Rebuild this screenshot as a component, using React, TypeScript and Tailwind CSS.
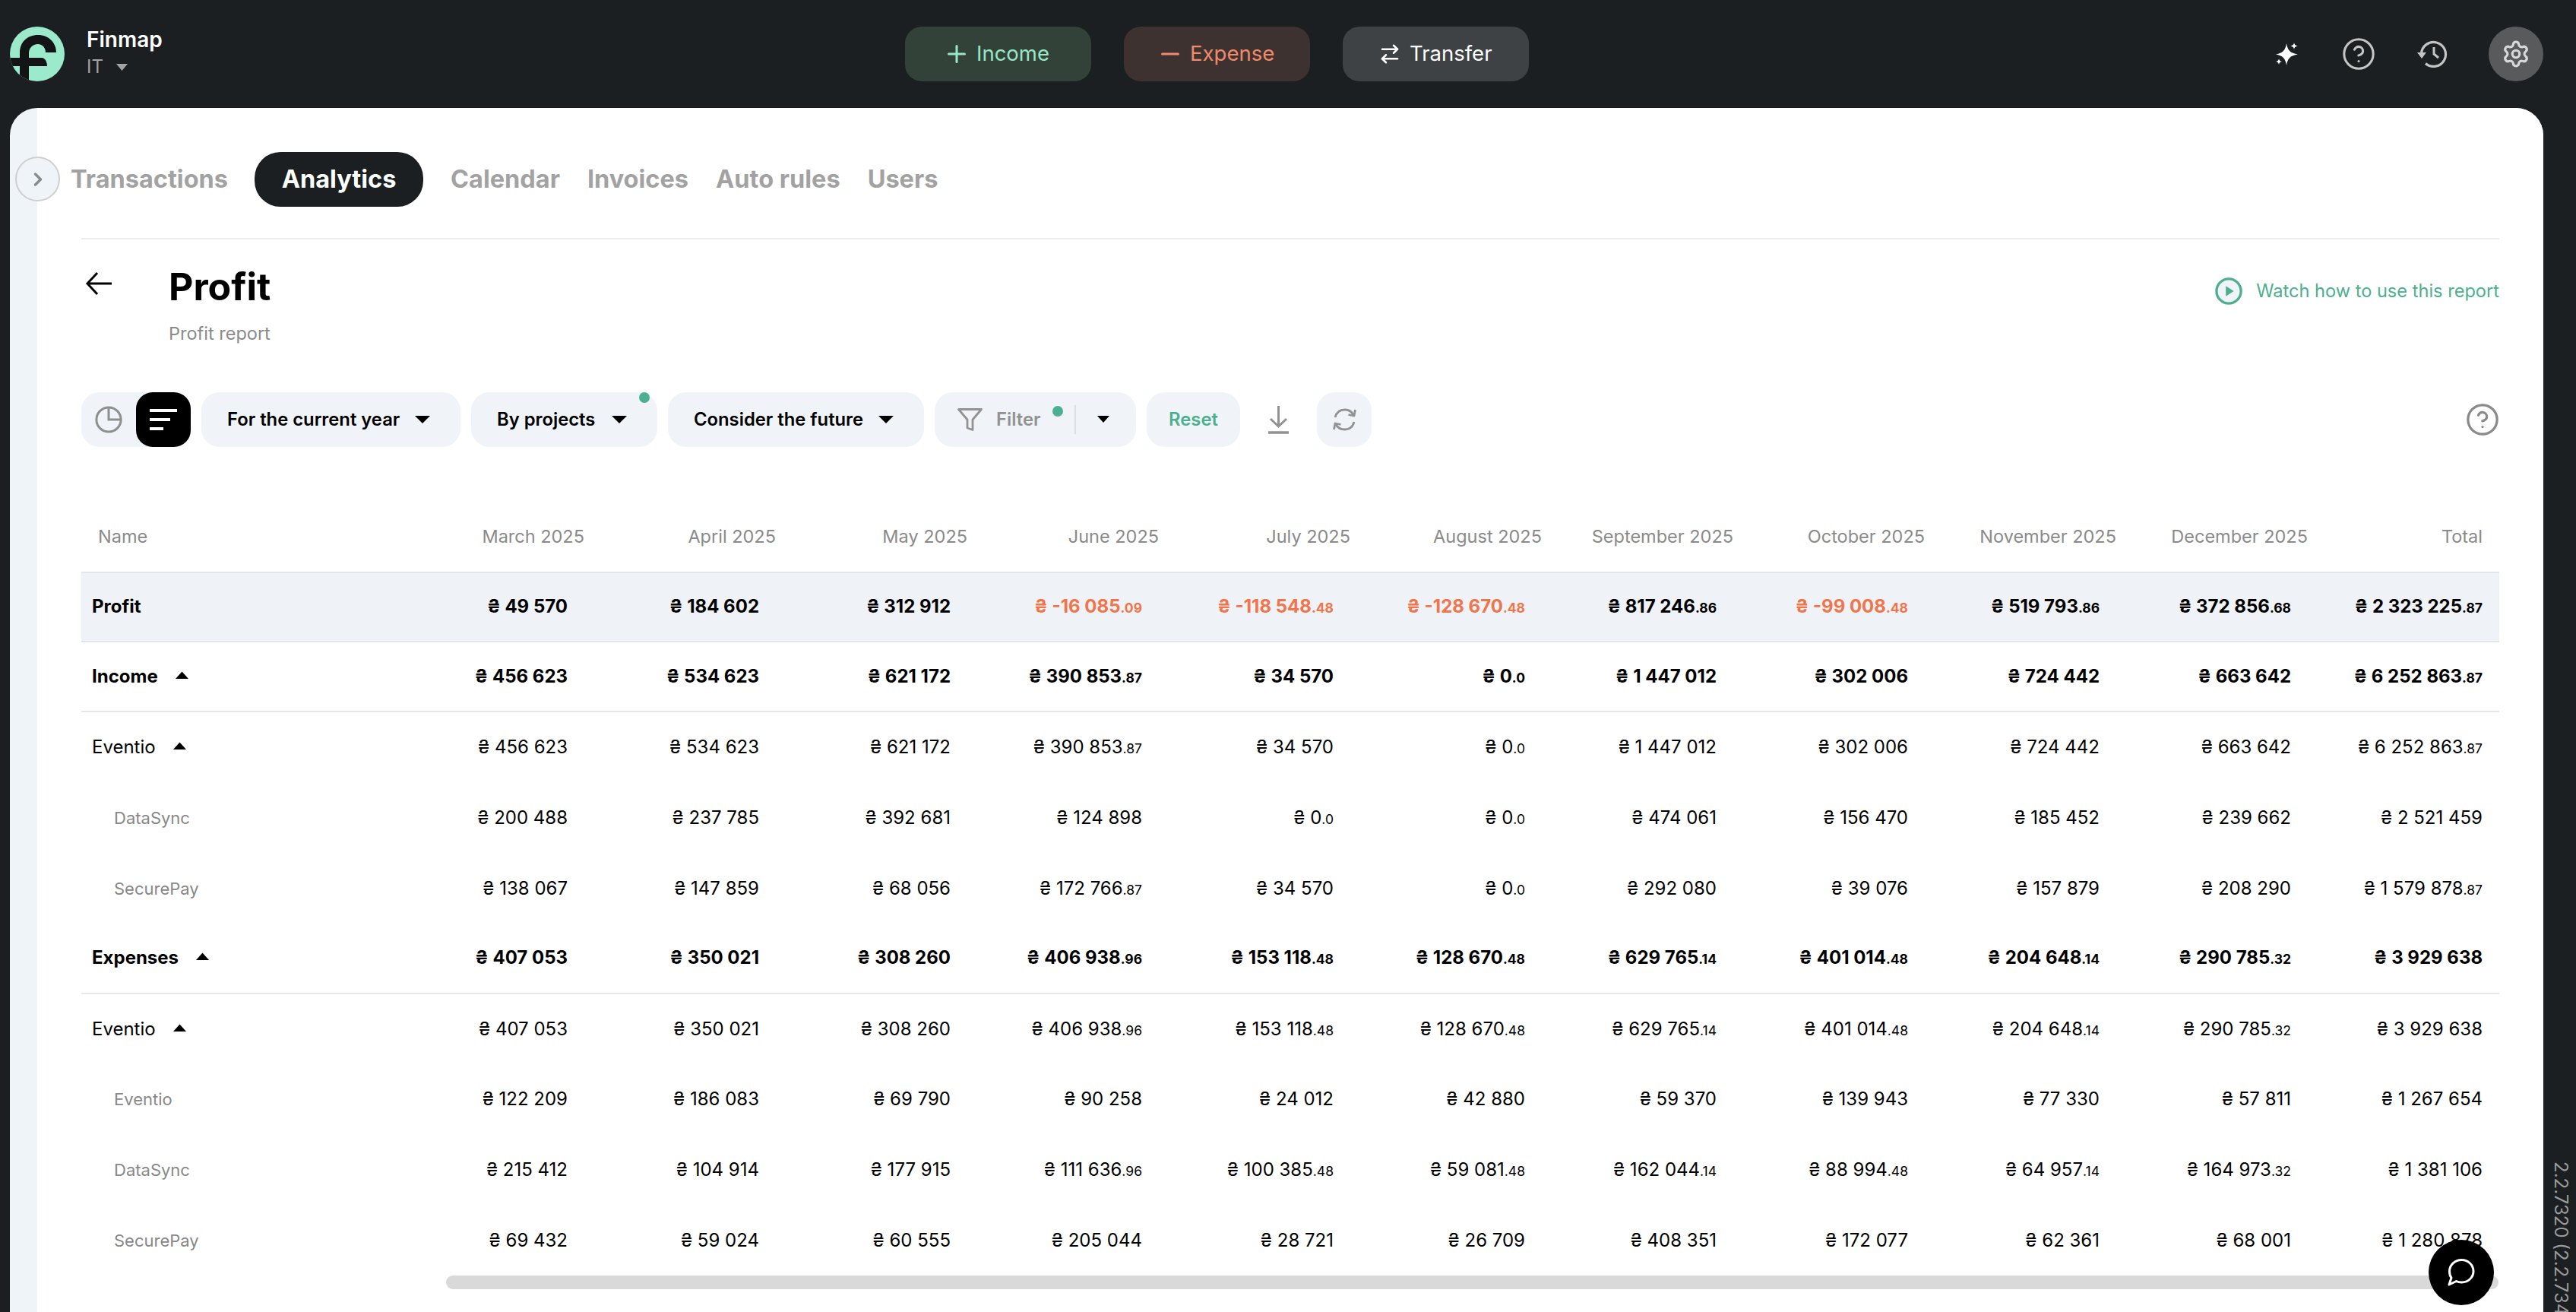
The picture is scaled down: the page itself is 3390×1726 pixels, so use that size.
import React from "react";
import { HelpCircle, Settings, ArrowRightLeft, Plus, Minus, ChevronRight } from "lucide-react";

const months = ["March 2025","April 2025","May 2025","June 2025","July 2025","August 2025","September 2025","October 2025","November 2025","December 2025"];

type Row = { label: string; kind: "profit"|"group"|"sub"|"leaf"; vals: string[] };

const rows: Row[] = [
  { label:"Profit", kind:"profit", vals:["49 570","184 602","312 912","-16 085.09","-118 548.48","-128 670.48","817 246.86","-99 008.48","519 793.86","372 856.68","2 323 225.87"] },
  { label:"Income", kind:"group", vals:["456 623","534 623","621 172","390 853.87","34 570","0.0","1 447 012","302 006","724 442","663 642","6 252 863.87"] },
  { label:"Eventio", kind:"sub", vals:["456 623","534 623","621 172","390 853.87","34 570","0.0","1 447 012","302 006","724 442","663 642","6 252 863.87"] },
  { label:"DataSync", kind:"leaf", vals:["200 488","237 785","392 681","124 898","0.0","0.0","474 061","156 470","185 452","239 662","2 521 459"] },
  { label:"SecurePay", kind:"leaf", vals:["138 067","147 859","68 056","172 766.87","34 570","0.0","292 080","39 076","157 879","208 290","1 579 878.87"] },
  { label:"Expenses", kind:"group", vals:["407 053","350 021","308 260","406 938.96","153 118.48","128 670.48","629 765.14","401 014.48","204 648.14","290 785.32","3 929 638"] },
  { label:"Eventio", kind:"sub", vals:["407 053","350 021","308 260","406 938.96","153 118.48","128 670.48","629 765.14","401 014.48","204 648.14","290 785.32","3 929 638"] },
  { label:"Eventio", kind:"leaf", vals:["122 209","186 083","69 790","90 258","24 012","42 880","59 370","139 943","77 330","57 811","1 267 654"] },
  { label:"DataSync", kind:"leaf", vals:["215 412","104 914","177 915","111 636.96","100 385.48","59 081.48","162 044.14","88 994.48","64 957.14","164 973.32","1 381 106"] },
  { label:"SecurePay", kind:"leaf", vals:["69 432","59 024","60 555","205 044","28 721","26 709","408 351","172 077","62 361","68 001","1 280 878"] },
];

const gridCols = "grid grid-cols-[431px_repeat(10,252px)_231px]";

function Caret({ up = false, className = "", w = 17, h = 10 }: { up?: boolean; className?: string; w?: number; h?: number }) {
  return (
    <svg width={w} height={h} viewBox="0 0 17 10" preserveAspectRatio="none" className={className}>
      <path d={up ? "M8.5 0.5 L17 10 L0 10 Z" : "M0 0 L17 0 L8.5 10 Z"} fill="currentColor" />
    </svg>
  );
}

function Money({ v, kind, total }: { v: string; kind: Row["kind"]; total: boolean }) {
  const neg = v.startsWith("-");
  const [i, d] = v.split(".");
  const weight = kind === "profit" || kind === "group" ? "font-bold" : "font-normal";
  const color = neg ? "text-[#f2744a]" : "text-black";
  return (
    <div className={`flex items-center justify-end ${total ? "pr-[22px]" : "pr-[43px]"}`}>
      <span className={`text-[24px] leading-none whitespace-pre ${weight} ${color}`}>
        {"₴ " + i}
        {d !== undefined && <span className="text-[17.5px]">{"." + d}</span>}
      </span>
    </div>
  );
}

function TableRow({ r }: { r: Row }) {
  const bg = r.kind === "profit" ? "bg-[#eff3f7] border-t-2 border-b-2 border-[#e1e5e9]" : "";
  const sep = r.kind === "group" ? "border-b-2 border-[#e6e8ea]" : "";
  return (
    <div className={`${gridCols} h-[92.6px] items-center box-border ${bg} ${sep}`}>
      <div className="flex items-center">
        {r.kind === "leaf" ? (
          <span className="pl-[43px] text-[22px] leading-none text-[#888888]">{r.label}</span>
        ) : (
          <span className={`pl-[14px] text-[24px] leading-none text-black ${r.kind === "sub" ? "font-normal" : "font-bold"}`}>{r.label}</span>
        )}
        {(r.kind === "group" || r.kind === "sub") && <Caret up className="ml-[23px] text-black mb-[4px]" />}
      </div>
      {r.vals.map((v, i) => (
        <Money key={i} v={v} kind={r.kind} total={i === 10} />
      ))}
    </div>
  );
}

function Pill({ label, className, dot }: { label: string; className: string; dot?: boolean }) {
  return (
    <button className={`relative h-[72px] rounded-[24px] bg-[#f0f4f8] flex items-center justify-between text-[23.8px] font-semibold text-black ${className}`}>
      <span>{label}</span>
      <Caret w={20} h={10} className="text-black" />
      {dot && <span className="absolute right-[10px] top-0 w-[14px] h-[14px] rounded-full bg-[#4cb08e]" />}
    </button>
  );
}

function Logo() {
  return (
    <svg width="72" height="72" viewBox="0 0 72 72">
      <defs><clipPath id="lc"><circle cx="36" cy="36" r="36" /></clipPath></defs>
      <circle cx="36" cy="36" r="36" fill="#9aeacb" />
      <g clipPath="url(#lc)" fill="#121416">
        <path d="M13 72 V35 C13 20 23 11 37 11 C51 11 61 21 61 34 H47 C47 28 43 23 37 23 C30 23 25 28 25 35 V72 Z" />
        <path d="M-2 41 H42 C46 41 49 46 49 52 H-2 Z" />
      </g>
    </svg>
  );
}

function Sparkles() {
  return (
    <svg width="29" height="30" viewBox="0 0 29 30" fill="#fff">
      <path d="M14 1 C15.300 10 19 14 29 15.500 C19 17 15.300 21 14 30 C12.700 21 9 17 0 15.500 C9 14 12.700 10 14 1 Z" />
      <path d="M24 0 C24.400 2.700 25.400 3.700 28.500 4.500 C25.400 5.300 24.400 6.300 24 9 C23.600 6.300 22.600 5.300 19.500 4.500 C22.600 3.700 23.600 2.700 24 0 Z" />
      <path d="M4 21 C4.400 23.400 5.300 24.300 8 25 C5.300 25.700 4.400 26.600 4 29 C3.600 26.600 2.700 25.700 0 25 C2.700 24.300 3.600 23.400 4 21 Z" />
    </svg>
  );
}

function HistoryIcon() {
  return (
    <svg width="40" height="36" viewBox="0 0 40 36" fill="none">
      <path d="M5.500 18 A16 16 0 1 1 11 30.500" stroke="#c4c4c4" strokeWidth="3.200" />
      <path d="M0 16 L12 16 L6 24 Z" fill="#c4c4c4" />
      <path d="M22 9 V18 L28 23" stroke="#c4c4c4" strokeWidth="3" />
    </svg>
  );
}

export default function App() {
  return (
    <div className="relative w-[3390px] h-[1726px] overflow-hidden bg-[#1b1f22] font-['Inter',sans-serif]">
      <header className="h-[142px] flex items-center pl-[13px] pr-[43px] relative">
        <div className="w-[1178px] flex items-center">
          <Logo />
          <div className="ml-[29px] mb-[3px] flex flex-col">
            <span className="text-[28px] leading-[34px] font-semibold text-white">Finmap</span>
            <span className="mt-[3px] text-[24px] leading-[32px] text-[#a3a3a3] flex items-center gap-[17px]">IT <Caret w={15} h={9} className="text-[#a3a3a3]" /></span>
          </div>
        </div>
        <div className="flex gap-[43px]">
          <button className="w-[245px] h-[72px] rounded-[22px] bg-[#334239] text-[#98e6c6] text-[27.5px] flex items-center pl-[50px] gap-[8px]">
            <Plus size={36} strokeWidth={2} /> Income
          </button>
          <button className="w-[245px] h-[72px] rounded-[22px] bg-[#3e3230] text-[#f08a6c] text-[27.5px] flex items-center pl-[43px] gap-[8px]">
            <Minus size={36} strokeWidth={2} /> Expense
          </button>
          <button className="w-[245px] h-[72px] rounded-[22px] bg-[#3e4244] text-white text-[27.5px] flex items-center pl-[47px] gap-[11px]">
            <ArrowRightLeft size={30} strokeWidth={2} /> Transfer
          </button>
        </div>
        <div className="ml-auto flex items-center">
          <Sparkles />
          <HelpCircle size={46} strokeWidth={1.6} className="text-[#c4c4c4] ml-[57px]" />
          <div className="ml-[54px]"><HistoryIcon /></div>
          <div className="ml-[54px] w-[72px] h-[72px] rounded-full bg-[#585a5b] flex items-center justify-center">
            <Settings size={38} strokeWidth={2} className="text-[#d8d8d8]" />
          </div>
        </div>
      </header>

      <div className="relative ml-[13px] mr-[43px] h-[1584px] rounded-t-[36px] overflow-hidden bg-[#eff4f8] pl-[36px]">
        <main className="h-full bg-white pl-[58px] pr-[58px]">
          <nav className="h-[173px] border-b-2 border-[#ebedef] flex items-center text-[32.5px] font-bold text-[#a2a2a2] pt-[17px] box-border">
            <span className="-ml-[14px]">Transactions</span>
            <span className="ml-[35px] h-[72px] w-[222px] rounded-[34px] bg-[#1b1f22] text-white flex items-center justify-center">Analytics</span>
            <span className="ml-[36px]">Calendar</span>
            <span className="ml-[36px]">Invoices</span>
            <span className="ml-[36px]">Auto rules</span>
            <span className="ml-[36px]">Users</span>
          </nav>

          <section className="flex items-start justify-between h-[201px]">
            <div className="flex items-start pt-[24px]">
              <svg width="36" height="32" viewBox="0 0 36 32" fill="none" stroke="#000" strokeWidth="3" className="ml-[5px] mt-[18px]">
                <path d="M35 16 H3 M16 2 L3 16 L16 30" />
              </svg>
              <div className="ml-[74px]">
                <h1 className="text-[50px] leading-[76px] font-bold text-black">Profit</h1>
                <p className="text-[23.5px] leading-[36px] text-[#8a8a8a] mt-[6px]">Profit report</p>
              </div>
            </div>
            <div className="flex items-center mt-[50px]">
              <svg width="36" height="36" viewBox="0 0 38 38">
                <circle cx="19" cy="19" r="17" fill="#f0f4f8" stroke="#4cb08e" strokeWidth="3.500" />
                <path d="M15 12 L26 19 L15 26 Z" fill="#4cb08e" />
              </svg>
              <span className="ml-[18px] text-[23.6px] text-[#4cb08e]">Watch how to use this report</span>
            </div>
          </section>

          <div className="flex items-center h-[72px]">
            <div className="w-[144px] h-[72px] rounded-[24px] bg-[#f0f4f8] flex items-center">
              <svg width="36" height="36" viewBox="0 0 38 38" fill="none" stroke="#8f8f8f" strokeWidth="3.200" className="ml-[18px]">
                <circle cx="19" cy="19" r="17" />
                <path d="M19 2 V19 H36" />
              </svg>
              <div className="ml-[18px] w-[72px] h-[72px] rounded-[22px] bg-black flex flex-col justify-center pl-[18px] gap-[7.500px]">
                <span className="block w-[36px] h-[4.500px] bg-white" />
                <span className="block w-[27px] h-[4.500px] bg-white" />
                <span className="block w-[18px] h-[4.500px] bg-white" />
              </div>
            </div>
            <Pill label="For the current year" className="ml-[14px] w-[341px] pl-[34px] pr-[40px]" />
            <Pill label="By projects" dot className="ml-[14px] w-[245px] pl-[34px] pr-[40px]" />
            <Pill label="Consider the future" className="ml-[14px] w-[337px] pl-[34px] pr-[40px]" />
            <div className="ml-[14px] w-[265px] h-[72px] rounded-[24px] bg-[#f0f4f8] flex items-center relative">
              <svg width="33" height="30" viewBox="0 0 33 30" fill="none" stroke="#929292" strokeWidth="2.800" strokeLinejoin="round" className="ml-[30px]">
                <path d="M1.500 1.500 H31.500 L20 15 V28.500 L13 26 V15 Z" />
              </svg>
              <span className="ml-[18px] text-[23.8px] font-semibold text-[#929292]">Filter</span>
              <span className="absolute left-[155px] top-[18px] w-[14px] h-[14px] rounded-full bg-[#4cb08e]" />
              <span className="absolute left-[184px] top-[17px] w-[2px] h-[38px] bg-[#dbdfe3]" />
              <Caret w={16} h={9} className="absolute left-[214px] top-[31px] text-black" />
            </div>
            <button className="ml-[14px] w-[123px] h-[72px] rounded-[24px] bg-[#f0f4f8] text-[23.8px] font-semibold text-[#4cb08e]">Reset</button>
            <svg width="27" height="37" viewBox="0 0 27 37" fill="none" stroke="#929292" strokeWidth="3" className="ml-[37px]">
              <path d="M13.500 0 V26 M3 17 L13.500 27 L24 17" />
              <path d="M0 35 H27" strokeWidth="3.500" />
            </svg>
            <div className="ml-[37px] w-[72px] h-[72px] rounded-[24px] bg-[#f0f4f8] flex items-center justify-center">
              <svg width="31" height="30" viewBox="0 0 31 30" fill="none" stroke="#929292" strokeWidth="2.800">
                <path d="M3 12 C5 5 10 2 15.500 2 C20.500 2 24.500 4 27 8.500" />
                <path d="M28 18 C26 25 21 28 15.500 28 C10.500 28 6.500 26 4 21.500" />
                <path d="M29.500 2 L28 10 L20.500 8.500" strokeLinejoin="round" />
                <path d="M1.500 28 L3 20 L10.500 21.500" strokeLinejoin="round" />
              </svg>
            </div>
            <HelpCircle size={46} strokeWidth={1.7} className="ml-auto mr-[-1px] text-[#8a8a8a]" />
          </div>

          <div className="mt-[72px] w-[3182px]">
            <div className={`${gridCols} h-[92px] items-center text-[23.5px] text-[#8a8a8a]`}>
              <span className="pl-[22px]">Name</span>
              {months.map((m) => (
                <span key={m} className="text-right pr-[21px] whitespace-nowrap">{m}</span>
              ))}
              <span className="text-right pr-[22px]">Total</span>
            </div>
            {rows.map((r, i) => (
              <TableRow key={i} r={r} />
            ))}
            <div className="ml-[480px] w-[2701px] h-[18px] rounded-full bg-[#d9d9d9]" />
          </div>
        </main>

        <button className="absolute left-[7px] top-[64px] w-[59px] h-[59px] rounded-full border-2 border-[#cfcfcf] bg-[#eff4f8] flex items-center justify-center">
          <ChevronRight size={28} strokeWidth={3} className="text-[#8a8a8a]" />
        </button>
      </div>

      <button className="absolute left-[3196px] top-[1631px] w-[86px] h-[86px] rounded-full bg-black flex items-center justify-center">
        <svg width="38" height="38" viewBox="0 0 38 38" fill="none" stroke="#fff" strokeWidth="3">
          <path d="M3 35 L6 26 C4 23.500 3.500 20.500 3.500 17.500 C3.500 9 10.500 2.500 19.500 2.500 C28.500 2.500 35 9.500 35 17.500 C35 25.500 28 32 19.500 32 C17 32 14.500 31.500 12.500 30.500 Z" strokeLinejoin="round" />
        </svg>
      </button>

      <div className="absolute left-[3354px] top-[1528px] text-[24px] leading-[32px] text-[#9a9a9a] whitespace-nowrap [writing-mode:vertical-rl]">2.2.7320 (2.2.7340)</div>
    </div>
  );
}
